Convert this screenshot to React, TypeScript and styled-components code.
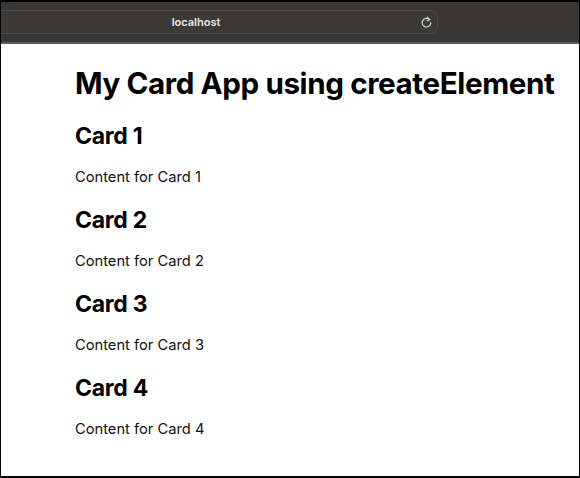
import React from "react";
import styled, { createGlobalStyle } from "styled-components";

const GlobalStyle = createGlobalStyle`
  html, body {
    margin: 0;
    padding: 0;
    background: #ffffff;
  }
  body {
    font-family: Inter, "Liberation Sans", sans-serif;
    -webkit-font-smoothing: antialiased;
  }
`;

const Frame = styled.div`
  box-sizing: border-box;
  width: 580px;
  height: 478px;
  border: 1px solid #000;
  border-top-width: 2px;
  border-bottom-width: 2px;
  display: flex;
  flex-direction: column;
  overflow: hidden;
`;

const Toolbar = styled.div`
  height: 40px;
  flex-shrink: 0;
  background: #383735;
  border-bottom: 2px solid #5b5a58;
  display: flex;
  align-items: center;
`;

const AddressField = styled.div`
  box-sizing: border-box;
  margin-left: -47px;
  flex: 0 0 484px;
  height: 24px;
  border: 1px solid #4c4b49;
  border-radius: 7px;
  background: #3b3a38;
  display: flex;
  align-items: center;
`;

const Host = styled.span`
  flex: 1;
  text-align: center;
  color: #e9e9e9;
  font-size: 11px;
  font-weight: 600;
  padding-left: 17px;
`;

const Reload = styled.svg`
  width: 13px;
  height: 13px;
  margin-right: 4px;
`;

const Page = styled.main`
  flex: 1;
  background: #fff;
  padding: 19px 0 0 74px;
`;

const Title = styled.h1`
  margin: 0 0 19px;
  font-size: 29.6px;
  font-weight: 700;
  letter-spacing: -0.4px;
  color: #000;
  line-height: 40px;
  white-space: nowrap;
`;

const Card = styled.section`
  margin-bottom: 14px;
`;

const CardTitle = styled.h2`
  margin: 0 0 12px;
  font-size: 23px;
  font-weight: 700;
  letter-spacing: -0.3px;
  line-height: 28px;
  color: #000;
`;

const CardText = styled.p`
  margin: 0;
  font-size: 14.7px;
  line-height: 30px;
  color: #111;
`;

const cards = [1, 2, 3, 4];

const App = () => {
  return (
    <>
      <GlobalStyle />
      <Frame>
        <Toolbar>
          <AddressField>
            <Host>localhost</Host>
            <Reload viewBox="0 0 12 12" fill="none" stroke="#d8d8d8" strokeWidth="1.1" strokeLinecap="round">
              <path d="M8.9 3.4A4 4 0 1 0 10 6.2" />
              <path d="M6.6 1.2 8.9 3.4 6.4 4.6" />
            </Reload>
          </AddressField>
        </Toolbar>
        <Page>
          <Title>My Card App using createElement</Title>
          {cards.map((n) => (
            <Card key={n}>
              <CardTitle>Card {n}</CardTitle>
              <CardText>Content for Card {n}</CardText>
            </Card>
          ))}
        </Page>
      </Frame>
    </>
  );
};

export default App;
